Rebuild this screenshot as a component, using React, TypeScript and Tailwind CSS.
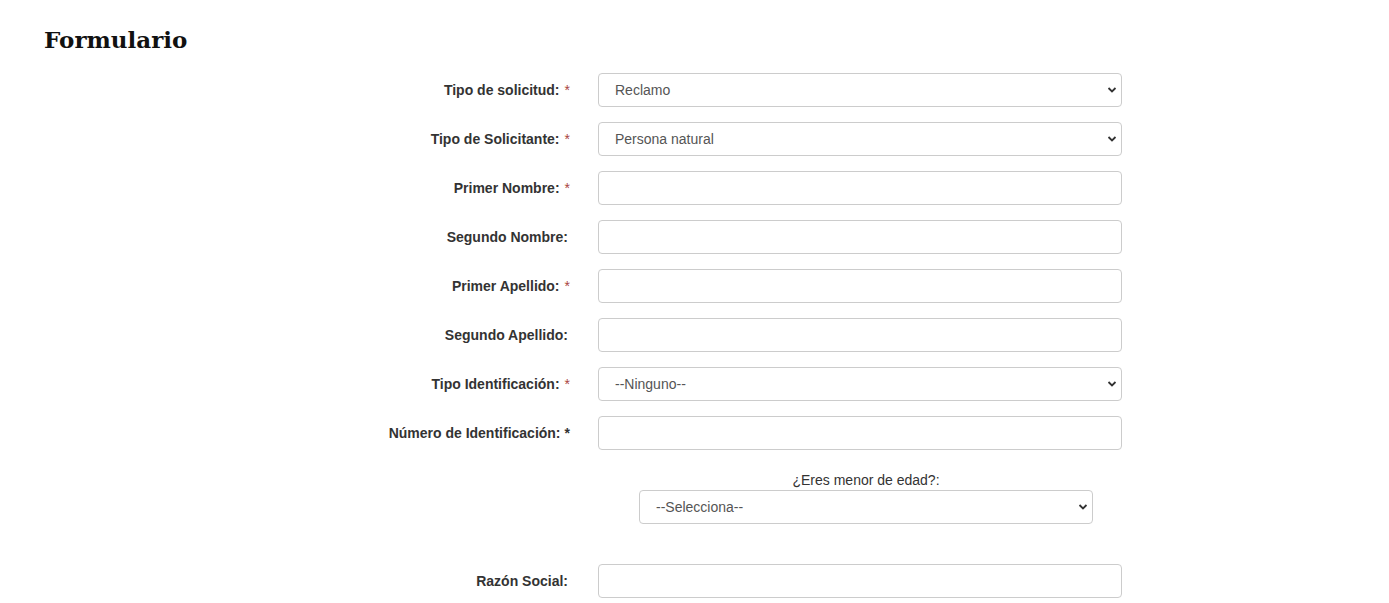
import React from "react";

type Field = {
  label: string;
  required?: boolean;
  type: "select" | "text";
  value?: string;
};

const fields: Field[] = [
  { label: "Tipo de solicitud:", required: true, type: "select", value: "Reclamo" },
  { label: "Tipo de Solicitante:", required: true, type: "select", value: "Persona natural" },
  { label: "Primer Nombre:", required: true, type: "text" },
  { label: "Segundo Nombre:", type: "text" },
  { label: "Primer Apellido:", required: true, type: "text" },
  { label: "Segundo Apellido:", type: "text" },
  { label: "Tipo Identificación:", required: true, type: "select", value: "--Ninguno--" },
];

const Chevron = () => (
  <svg
    width="10"
    height="7"
    viewBox="0 0 10 7"
    className="pointer-events-none absolute right-[5px] top-1/2 -translate-y-1/2"
  >
    <path d="M1.5 1.5 L5 5 L8.5 1.5" fill="none" stroke="#333" strokeWidth="1.8" />
  </svg>
);

const SelectBox = ({ value, className = "" }: { value: string; className?: string }) => (
  <div className={`relative h-[34px] ${className}`}>
    <select
      defaultValue={value}
      className="h-full w-full appearance-none rounded-[4px] border border-[#ccc] bg-white pl-4 pt-[1px] text-[14px] text-[#555] outline-none"
    >
      <option>{value}</option>
    </select>
    <Chevron />
  </div>
);

const TextBox = () => (
  <input
    type="text"
    className="h-[34px] w-[524px] rounded-[4px] border border-[#ccc] bg-white px-3 text-[14px] text-[#555] outline-none"
  />
);

// label column: right aligned, text ends at x=570
const Label = ({ text, required, star }: { text: string; required?: boolean; star?: boolean }) => (
  <label
    className={`w-[570px] shrink-0 text-right text-[14px] font-bold text-[#333] ${
      required || star ? "" : "pr-[2px]"
    }`}
  >
    {text}
    {required && <span className="ml-[5px] font-normal text-[#a94442]">*</span>}
    {star && <span className="ml-[4px]">*</span>}
  </label>
);

export default function App() {
  return (
    <div
      className="min-h-[603px] bg-white"
      style={{ fontFamily: '"Liberation Sans", Arial, sans-serif' }}
    >
      <h1
        className="pl-[44px] pt-[25px] text-[23px] font-bold leading-[30px] text-[#111]"
        style={{ fontFamily: '"DejaVu Serif", Georgia, serif' }}
      >
        Formulario
      </h1>

      <form className="mt-[18px] flex flex-col gap-[15px]">
        {fields.map((f) => (
          <div key={f.label} className="flex items-center gap-[28px]">
            <Label text={f.label} required={f.required} />
            {f.type === "select" ? (
              <SelectBox value={f.value ?? ""} className="w-[524px]" />
            ) : (
              <TextBox />
            )}
          </div>
        ))}

        <div className="flex items-center gap-[28px]">
          <Label text="Número de Identificación:" star />
          <TextBox />
        </div>

        <div className="ml-[639px] mt-[5px] flex w-[454px] flex-col items-center">
          <span className="text-[14px] leading-[20px] text-[#333]">¿Eres menor de edad?:</span>
          <SelectBox value="--Selecciona--" className="w-[454px]" />
        </div>

        <div className="mt-[25px] flex items-center gap-[28px]">
          <Label text="Razón Social:" />
          <TextBox />
        </div>
      </form>
    </div>
  );
}
